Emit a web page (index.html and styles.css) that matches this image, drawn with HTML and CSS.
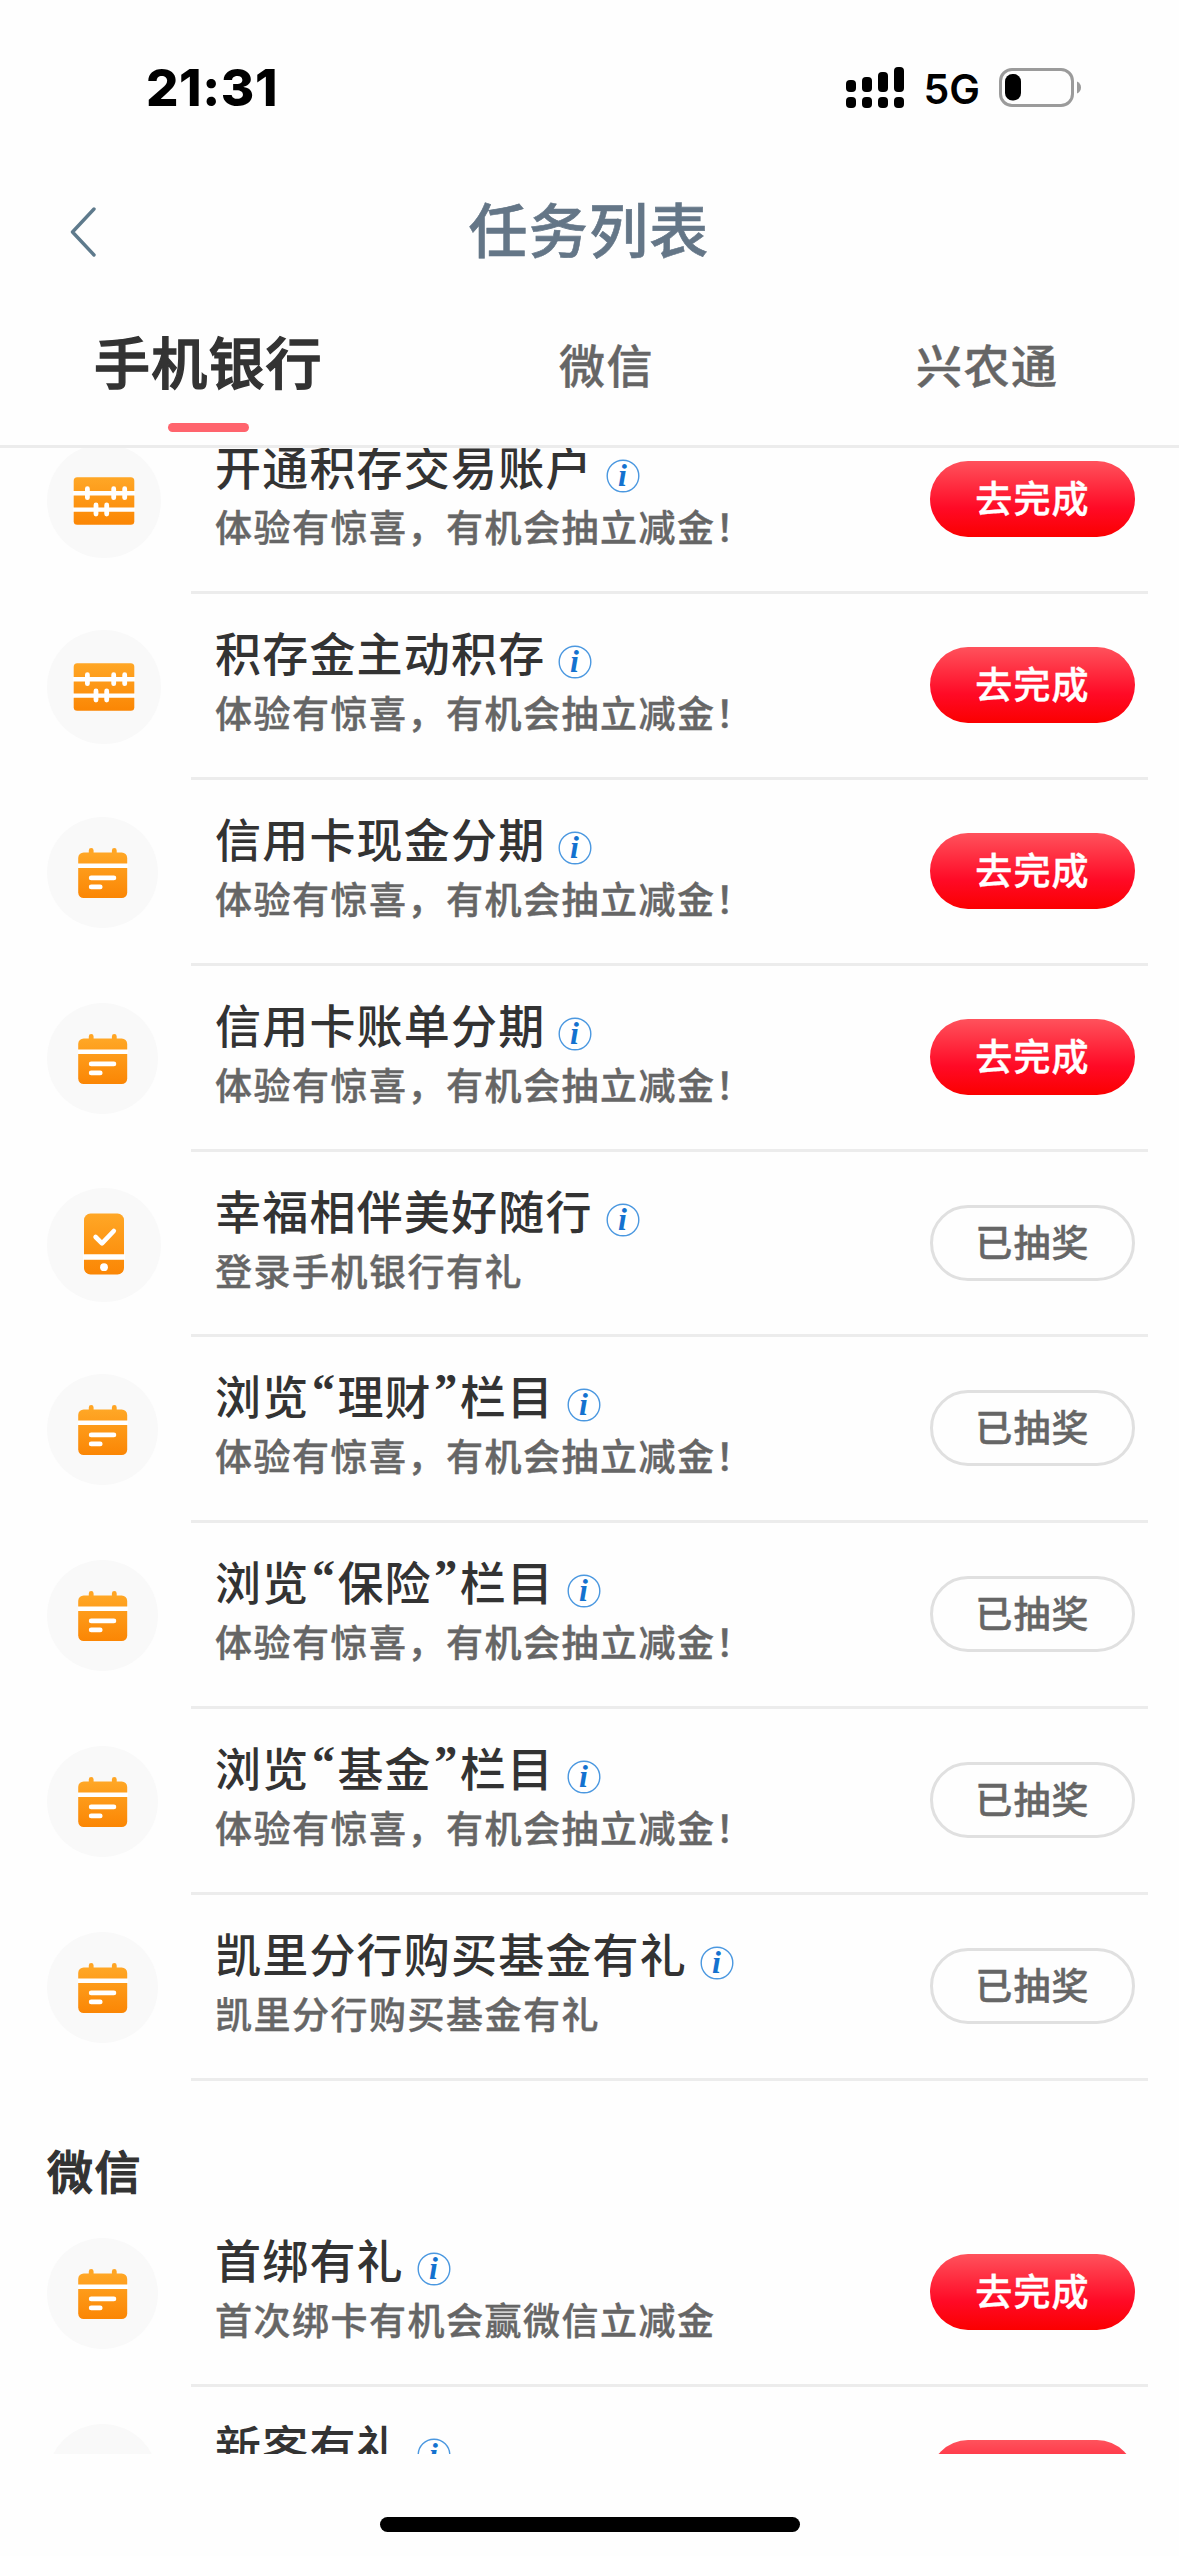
FILE: index.html
```html
<!DOCTYPE html>
<html lang="zh-CN">
<head>
<meta charset="utf-8">
<title>任务列表</title>
<link rel="stylesheet" href="styles.css">
</head>
<body>
<svg class="sprite" aria-hidden="true">
  <defs>
    <linearGradient id="orange" x1="0" y1="0" x2="0" y2="1">
      <stop offset="0" stop-color="#ffa726"/>
      <stop offset="1" stop-color="#fb8604"/>
    </linearGradient>
    <symbol id="abacus" viewBox="0 0 114 114">
      <circle cx="57" cy="57" r="57" fill="#f9f9f9"/>
      <rect x="26.7" y="33.3" width="60.6" height="47.4" rx="3.5" fill="url(#orange)"/>
      <path d="M26 49.2h62M26 65.6h62" stroke="#fff" stroke-width="4.4"/>
      <path d="M40.4 44.7v9M66.7 44.7v9M77.7 44.7v9M49 61v9M59.7 61v9" stroke="#fff" stroke-width="4.8" stroke-linecap="round"/>
    </symbol>
    <symbol id="calendar" viewBox="0 0 111 111">
      <circle cx="55.5" cy="55.5" r="55.5" fill="#f9f9f9"/>
      <path d="M44.2 33.5v6M67.3 33.5v6" stroke="#ffa524" stroke-width="4.8" stroke-linecap="round"/>
      <rect x="31.2" y="35.5" width="49" height="45.5" rx="5.5" fill="url(#orange)"/>
      <path d="M31 48.7h50" stroke="#fff" stroke-width="4.4"/>
      <path d="M44.2 60.9h22.7M44.2 69.900h9" stroke="#fff" stroke-width="4.8" stroke-linecap="round"/>
    </symbol>
    <symbol id="phone" viewBox="0 0 114 114">
      <circle cx="57" cy="57" r="57" fill="#f9f9f9"/>
      <rect x="37" y="25.5" width="40" height="61" rx="6.5" fill="url(#orange)"/>
      <path d="M36 69h42" stroke="#fff" stroke-width="5.6"/>
      <path d="M48.6 49l6.4 6.4L66.8 43" fill="none" stroke="#fff" stroke-width="4.6" stroke-linecap="round" stroke-linejoin="round"/>
      <circle cx="57" cy="79.2" r="3.9" fill="#fff"/>
    </symbol>
    <symbol id="info" viewBox="0 0 34 34">
      <circle cx="17" cy="17" r="15.8" fill="#fff" stroke="#4b98e0" stroke-width="1.4"/>
      <text x="17" y="27" text-anchor="middle" class="info-letter">i</text>
    </symbol>
  </defs>
</svg>

<div class="screen">
  <div class="status">
    <span class="time">21:31</span>
    <div class="status-right">
      <svg class="signal" viewBox="0 0 58 42">
        <rect x="0" y="13" width="10" height="12" rx="4"/><rect x="16" y="10" width="10" height="15" rx="4"/>
        <rect x="32" y="5" width="10" height="20" rx="4"/><rect x="48" y="0" width="10" height="25" rx="4"/>
        <rect x="0" y="30" width="10" height="11" rx="4"/><rect x="16" y="30" width="10" height="11" rx="4"/>
        <rect x="32" y="30" width="10" height="11" rx="4"/><rect x="48" y="30" width="10" height="11" rx="4"/>
      </svg>
      <span class="network">5G</span>
      <svg class="battery" viewBox="0 0 82 40">
        <rect x="1.5" y="1.5" width="72" height="36" rx="11.5" fill="none" stroke="#9b9b9b" stroke-width="3"/>
        <rect x="6" y="6" width="16" height="26.5" rx="7.5"/>
        <path d="M78 13.5c2.7 1.3 4 3.3 4 6s-1.3 4.700-4 6z" fill="#9b9b9b"/>
      </svg>
    </div>
  </div>

  <header class="nav">
    <svg class="back" viewBox="0 0 30 52"><path d="M27 3L5.5 26 27 49" fill="none" stroke="#5e7a8c" stroke-width="3.4" stroke-linecap="round" stroke-linejoin="round"/></svg>
    <h1>任务列表</h1>
  </header>

  <nav class="tabs">
    <span class="tab active">手机银行</span>
    <span class="tab">微信</span>
    <span class="tab">兴农通</span>
  </nav>

  <main class="viewport">
    <div class="list">
      <div class="row"><div class="ico"><svg class="big"><use href="#abacus"/></svg></div><div class="body"><div class="text"><h2>开通积存交易账户<svg class="info"><use href="#info"/></svg></h2><p>体验有惊喜，有机会抽立减金！</p></div><span class="btn go">去完成</span></div></div>
      <div class="row"><div class="ico"><svg class="big"><use href="#abacus"/></svg></div><div class="body"><div class="text"><h2>积存金主动积存<svg class="info"><use href="#info"/></svg></h2><p>体验有惊喜，有机会抽立减金！</p></div><span class="btn go">去完成</span></div></div>
      <div class="row"><div class="ico"><svg><use href="#calendar"/></svg></div><div class="body"><div class="text"><h2>信用卡现金分期<svg class="info"><use href="#info"/></svg></h2><p>体验有惊喜，有机会抽立减金！</p></div><span class="btn go">去完成</span></div></div>
      <div class="row"><div class="ico"><svg><use href="#calendar"/></svg></div><div class="body"><div class="text"><h2>信用卡账单分期<svg class="info"><use href="#info"/></svg></h2><p>体验有惊喜，有机会抽立减金！</p></div><span class="btn go">去完成</span></div></div>
      <div class="row"><div class="ico"><svg class="big"><use href="#phone"/></svg></div><div class="body"><div class="text"><h2>幸福相伴美好随行<svg class="info"><use href="#info"/></svg></h2><p>登录手机银行有礼</p></div><span class="btn done">已抽奖</span></div></div>
      <div class="row"><div class="ico"><svg><use href="#calendar"/></svg></div><div class="body"><div class="text"><h2>浏览<span class="q">“</span>理财<span class="q">”</span>栏目<svg class="info"><use href="#info"/></svg></h2><p>体验有惊喜，有机会抽立减金！</p></div><span class="btn done">已抽奖</span></div></div>
      <div class="row"><div class="ico"><svg><use href="#calendar"/></svg></div><div class="body"><div class="text"><h2>浏览<span class="q">“</span>保险<span class="q">”</span>栏目<svg class="info"><use href="#info"/></svg></h2><p>体验有惊喜，有机会抽立减金！</p></div><span class="btn done">已抽奖</span></div></div>
      <div class="row"><div class="ico"><svg><use href="#calendar"/></svg></div><div class="body"><div class="text"><h2>浏览<span class="q">“</span>基金<span class="q">”</span>栏目<svg class="info"><use href="#info"/></svg></h2><p>体验有惊喜，有机会抽立减金！</p></div><span class="btn done">已抽奖</span></div></div>
      <div class="row"><div class="ico"><svg><use href="#calendar"/></svg></div><div class="body"><div class="text"><h2>凯里分行购买基金有礼<svg class="info"><use href="#info"/></svg></h2><p>凯里分行购买基金有礼</p></div><span class="btn done">已抽奖</span></div></div>
      <h3 class="section">微信</h3>
      <div class="row"><div class="ico"><svg><use href="#calendar"/></svg></div><div class="body"><div class="text"><h2>首绑有礼<svg class="info"><use href="#info"/></svg></h2><p>首次绑卡有机会赢微信立减金</p></div><span class="btn go">去完成</span></div></div>
      <div class="row"><div class="ico"><svg><use href="#calendar"/></svg></div><div class="body"><div class="text"><h2>新客有礼<svg class="info"><use href="#info"/></svg></h2></div><span class="btn go"></span></div></div>
    </div>
  </main>

  <footer class="home"><div class="home-bar"></div></footer>
</div>
</body>
</html>
```
FILE: styles.css
```css
* { box-sizing: border-box; margin: 0; padding: 0; }
body {
  width: 1179px;
  background: #fefefe;
  color: #333;
  font-family: "Noto Sans CJK SC", sans-serif;
}
.sprite { position: absolute; width: 0; height: 0; }
.info-letter {
  font: italic bold 32px "Liberation Serif", serif;
  fill: #1472cf;
}
.screen {
  display: flex;
  flex-direction: column;
  height: 2556px;
  overflow: hidden;
}

/* status bar */
.status {
  display: flex;
  justify-content: space-between;
  align-items: center;
  height: 176px;
  padding: 0 98px 0 146px;
  color: #000;
  font-family: Inter, sans-serif;
}
.time { font-size: 51px; font-weight: 800; line-height: 60px; letter-spacing: 0.6px; }
.status-right { display: flex; align-items: center; }
.signal { width: 58px; height: 42px; }
.network { margin: 2px 19px 0 20px; font-size: 41px; font-weight: 600; line-height: 50px; }
.battery { width: 82px; height: 40px; }

/* title bar */
.nav {
  display: flex;
  align-items: center;
  height: 112px;
  padding: 0 67px;
}
.back { width: 30px; height: 52px; }
.nav h1 {
  flex: 1;
  margin: -8px 31px 0 0;
  color: #647687;
  font-size: 59px;
  font-weight: 500;
  line-height: 80px;
  letter-spacing: 1.3px;
  text-align: center;
  -webkit-text-stroke: 0.6px;
}

/* tabs */
.tabs {
  display: grid;
  grid-template-columns: 465px 357px 1fr;
  height: 160px;
  padding-left: 94px;
  border-bottom: 3px solid #ececec;
}
.tab {
  padding-top: 45px;
  color: #666;
  font-size: 46px;
  font-weight: 500;
  line-height: 60px;
  letter-spacing: 1.5px;
  -webkit-text-stroke: 0.4px;
}
.tab.active {
  display: flex;
  flex-direction: column;
  align-items: center;
  justify-self: start;
  padding-top: 37px;
  color: #333;
  font-size: 56px;
  font-weight: 500;
  line-height: 70px;
  letter-spacing: 1.2px;
  -webkit-text-stroke: 1.4px;
}
.tab.active::after {
  content: "";
  width: 81px;
  height: 9px;
  margin-top: 28px;
  border-radius: 5px;
  background: #ff646d;
}

/* task list */
.viewport { height: 2006px; overflow: hidden; }
.list { margin-top: -40px; }
.row { display: flex; height: 185.9px; padding-right: 31px; }
.ico { width: 191px; padding: 37px 0 0 47px; }
.ico svg { display: block; width: 111px; height: 111px; }
.ico svg.big { width: 114px; height: 114px; margin-top: -1px; }
.body {
  flex: 1;
  display: flex;
  justify-content: space-between;
  padding: 27px 13px 0 24px;
  border-bottom: 3px solid #ececec;
}
.row h2 {
  display: flex;
  height: 62px;
  font-size: 46px;
  font-weight: 500;
  line-height: 60px;
  letter-spacing: 1.2px;
  white-space: nowrap;
}
.info { width: 34px; height: 34px; margin: 24px 0 0 13px; }
.q {
  width: 28px;
  font-family: "Liberation Serif", serif;
  font-size: 46px;
  font-weight: 700;
  line-height: 53px;
  letter-spacing: 0;
  text-align: center;
}
.row p {
  color: #666;
  font-size: 37px;
  font-weight: 500;
  line-height: 58px;
  letter-spacing: 1.5px;
  white-space: nowrap;
  -webkit-text-stroke: 0.4px;
}
.btn {
  width: 205px;
  height: 76px;
  margin-top: 26px;
  border-radius: 38px;
  font-size: 37px;
  font-weight: 500;
  line-height: 72px;
  letter-spacing: 1.2px;
  text-align: center;
  -webkit-text-stroke: 0.4px;
}
.go {
  background: linear-gradient(#ff525c, #ff0a26 62%, #fb0000);
  color: #fff;
}
.done { border: 3px solid #e0e0e0; color: #666; line-height: 66px; }
.section {
  height: 120px;
  padding: 58px 0 0 47px;
  font-size: 46px;
  font-weight: 500;
  line-height: 60px;
  letter-spacing: 1.5px;
  -webkit-text-stroke: 1.2px;
}

/* home indicator */
.home { flex: 1; display: flex; justify-content: center; align-items: flex-start; padding-top: 63px; }
.home-bar { width: 420px; height: 15px; border-radius: 8px; background: #000; }
```
